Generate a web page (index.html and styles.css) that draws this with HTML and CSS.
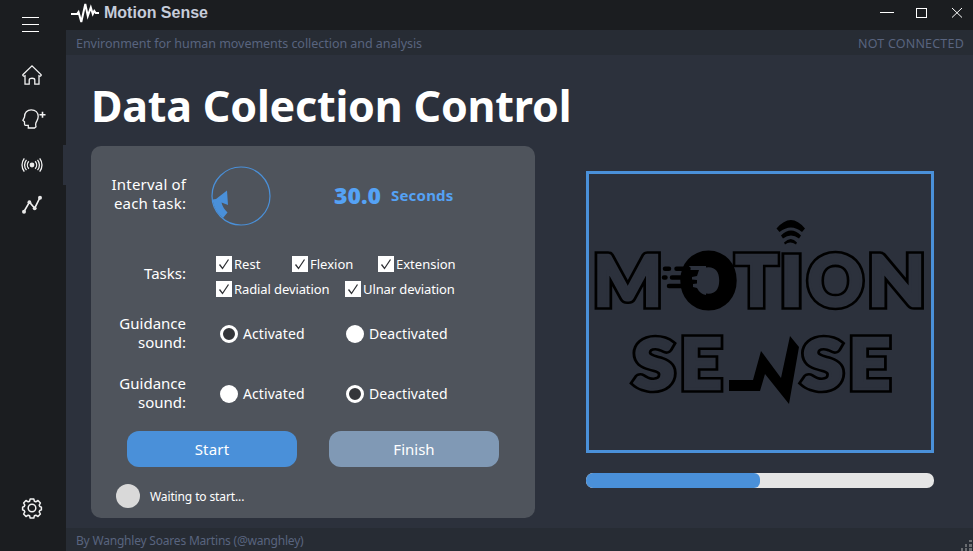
FILE: index.html
```html
<!DOCTYPE html>
<html lang="en">
<head>
<meta charset="utf-8">
<title>Motion Sense</title>
<link rel="stylesheet" href="styles.css">
</head>
<body>
<div class="window">
  <nav class="sidebar">
    <svg class="icon menu" viewBox="0 0 20 20"><path d="M0 3.5h17M0 10.5h17M0 17.5h17" shape-rendering="crispEdges"/></svg>
    <svg class="icon home" viewBox="0 0 20 20"><path d="M.8 9.8 10 .9l9.2 8.9c.2.9-.8 1.6-2.2 1v8.3h-4.2v-4.2c0-2.2-5.6-2.2-5.6 0v4.2H3v-8.3c-1.4.6-2.4-.1-2.2-1z"/></svg>
    <svg class="icon user" viewBox="0 0 24 20"><path d="M6.300 19v-2.700H3.500c-.8 0-1-.4-1-1.3v-2.200L.9 11.400 2.500 8C2.300 3.400 5.400.8 9.200.8c4.400 0 7 3 7 6.800 0 3.200-1.800 4.500-2.400 6.600-.4 1.500-.1 2.500.2 3.600L12.500 19z"/><path class="bold" d="M20.500 2.800v6M17.500 5.800h6"/></svg>
    <svg class="icon signal" viewBox="0 0 20 16"><circle class="dot" cx="10" cy="8" r="2.400"/><path d="M6.800 4.300a5.500 5.500 0 0 0 0 7.400M13.200 4.300a5.500 5.500 0 0 1 0 7.400M4.500 2.800a8 8 0 0 0 0 10.400M15.500 2.800a8 8 0 0 1 0 10.400M2.300 1.300a11 11 0 0 0 0 13.400M17.700 1.300a11 11 0 0 1 0 13.400"/></svg>
    <svg class="icon chart" viewBox="0 0 20 20"><path class="bold" d="m2 16.500 5.500-9.300 5.200 6L18 2.500"/><g class="dot"><circle cx="2" cy="16.700" r="2"/><circle cx="7.400" cy="7.200" r="1.900"/><circle cx="12.700" cy="13.300" r="1.900"/><circle cx="18" cy="2.700" r="2"/></g></svg>
    <svg class="icon gear" viewBox="0 0 20 20"><path class="rim" d="M8.200.9h3.600l.6 2.300 1.400.6 2.200-1.300 2.400 2.500-1.200 2.100.6 1.400 1.600.6v2.800l-1.600.6-.6 1.400 1.200 2.100-2.400 2.500-2.200-1.300-1.400.6-.6 2.300H8.200l-.6-2.300-1.400-.6L4 18.500 1.600 16l1.200-2.100-.6-1.400-1.600-.6V9.100l1.600-.6.6-1.400L1.600 5 4 2.500l2.200 1.300 1.400-.6z"/><circle class="rim" cx="10" cy="10" r="3.800"/></svg>
  </nav>
  <div class="main">
    <header class="titlebar">
      <svg class="pulse" viewBox="0 0 28 22"><path d="M0 12h6l1.500-2L10.300 20 14.300 2l2.500 12 3-8.500 2 6.500 1.500-3 1.500 2H28"/></svg>
      <span class="app-name">Motion Sense</span>
      <svg class="controls" viewBox="0 0 84 12" shape-rendering="crispEdges"><path d="M0 6.500h14M36.500 2.500h10v9h-10z"/><path d="m72 2 10 9.500M82 2 72 11.500" shape-rendering="auto"/></svg>
    </header>
    <div class="infobar"><span class="desc">Environment for human movements collection and analysis</span><span class="conn">NOT CONNECTED</span></div>
    <main class="content">
      <span class="active-tab"></span>
      <h1>Data Colection Control</h1>
      <div class="columns">
        <section class="panel">
          <div class="row interval">
            <div class="label"><span class="wide">Interval of</span><br><span class="wide">each task:</span></div>
            <svg class="dial" viewBox="0 0 60 60"><circle cx="30" cy="30" r="29"/><path d="M1.500 33.500 5 33 16 24.500l1 14.500-6.500-2.500q1 5 6 10L12 52Q3 45 1.500 33.500z"/></svg>
            <div class="value"><b>30.0</b><span>Seconds</span></div>
          </div>
          <div class="row tasks">
            <div class="label">Tasks:</div>
            <div class="checks">
              <div class="check-line">
                <label class="check c1"><svg viewBox="0 0 16 16"><path d="m3.500 8.500 3 4 6-9"/></svg><span>Rest</span></label>
                <label class="check c2"><svg viewBox="0 0 16 16"><path d="m3.500 8.500 3 4 6-9"/></svg><span>Flexion</span></label>
                <label class="check"><svg viewBox="0 0 16 16"><path d="m3.500 8.500 3 4 6-9"/></svg><span>Extension</span></label>
              </div>
              <div class="check-line tight">
                <label class="check c3"><svg viewBox="0 0 16 16"><path d="m3.500 8.500 3 4 6-9"/></svg><span>Radial deviation</span></label>
                <label class="check"><svg viewBox="0 0 16 16"><path d="m3.500 8.500 3 4 6-9"/></svg><span>Ulnar deviation</span></label>
              </div>
            </div>
          </div>
          <div class="row sound">
            <div class="label">Guidance<br>sound:</div>
            <label class="radio"><i class="on"></i><span>Activated</span></label>
            <label class="radio"><i></i><span>Deactivated</span></label>
          </div>
          <div class="row sound second">
            <div class="label">Guidance<br>sound:</div>
            <label class="radio"><i></i><span>Activated</span></label>
            <label class="radio"><i class="on"></i><span>Deactivated</span></label>
          </div>
          <div class="buttons"><button class="start">Start</button><button class="finish">Finish</button></div>
          <div class="status"><i></i><span>Waiting to start...</span></div>
        </section>
        <section class="preview">
          <div class="frame">
            <svg class="logo" viewBox="589 174 342 276">
              <defs>
                <g id="letters">
                  <text transform="translate(627.800 306) scale(1.050 1)">M</text>
                  <text transform="translate(756.500 306)">T</text>
                  <text transform="translate(791.500 306) scale(1.120 1)">I</text>
                  <text transform="translate(835.500 306)">O</text>
                  <text transform="translate(896.500 306) scale(1.080 1)">N</text>
                  <text transform="translate(654 388.500) scale(1.100 1)">S</text>
                  <text transform="translate(701 388.500) scale(1.060 1)">E</text>
                  <text transform="translate(822.500 388.500) scale(1.100 1)">S</text>
                  <text transform="translate(869.500 388.500) scale(1.060 1)">E</text>
                </g>
              </defs>
              <use href="#letters" class="edge"/>
              <use href="#letters" class="face"/>
              <text class="solid" transform="translate(708.500 306) scale(.95 1)">O</text>
              <path class="gap" d="M689 266h17v29q-6-1-9-7l-4-1v-3l4-.5v-3.500l-5-.5v-2.500l5-1 2-6h-9z"/>
              <path class="streaks" d="M665 268.700h4M676.500 268.700h12M664 277.500h1.500M672 277.500h16M669 286h18"/>
              <path d="M729 380h24l8-29 20 27 9-42 9 11-10 57-24-30-5 17h-31z"/>
              <path d="M776.500 228.500q14.500-17 28.500 0l-3 3.500q-11-9-22.500 0zM781 235.500q10-10 20 0l-2 3q-8-6-16 0zM784 242.500q7-7 13 0l-1 2q-6-4-11 0z"/>
            </svg>
          </div>
          <div class="progress"><div class="bar"></div></div>
        </section>
      </div>
    </main>
    <footer class="footer"><span>By Wanghley Soares Martins (@wanghley)</span>
      <svg class="grip" viewBox="0 0 12 12"><path d="M8 0h3v2H8zM4 4h2v3H4zM8 4h3v3H8zM0 8h2v3H0zM4 8h2v3H4zM8 8h3v3H8z"/></svg>
    </footer>
  </div>
</div>
</body>
</html>
```
FILE: styles.css
```css
* { box-sizing: border-box; }
body { margin: 0; font-family: "Noto Sans", "Open Sans", sans-serif; color: #fff; }
.window { display: flex; width: 973px; height: 551px; overflow: hidden; background: #2c313c; }
.sidebar { width: 66px; background: #1b1d20; display: flex; flex-direction: column; align-items: flex-start; padding: 14px 0 0 22px; }
.icon { width: 20px; height: 20px; fill: none; stroke: #f2f2f2; stroke-width: 1.3; flex: none; overflow: visible; }
.icon .bold { stroke-width: 1.6; }
.icon .dot { fill: #e8e8e8; stroke: none; }
.icon .rim { stroke-width: 1.5; stroke-linejoin: round; }
.menu { stroke-width: 1; stroke: #fff; }
.home { margin-top: 31px; }
.user { margin-top: 24px; width: 24px; }
.signal { margin-top: 28px; height: 16px; }
.chart { margin-top: 22px; }
.gear { margin-top: 283px; }
.main { flex: 1; display: flex; flex-direction: column; min-width: 0; }
.titlebar { height: 30px; flex: none; background: #1b1d20; display: flex; align-items: flex-start; padding: 2px 11px 0 5px; }
.pulse { width: 28px; height: 22px; fill: none; stroke: #fff; stroke-width: 2; }
.app-name { font: bold 16px/21px "Liberation Sans", sans-serif; color: #c6ccda; margin-left: 5px; }
.controls { width: 84px; height: 12px; margin: 4px -2px 0 auto; fill: none; stroke: #fff; stroke-width: 1; }
.infobar, .footer { background: #272c34; color: #59647f; display: flex; justify-content: space-between; flex: none; font-size: 12.5px; }
.infobar { height: 25px; line-height: 27px; padding: 0 9px 0 10px; }
.desc { letter-spacing: -.04px; }
.conn { letter-spacing: .2px; }
.footer { height: 23px; line-height: 26px; padding: 0 0 0 10px; font-size: 12px; letter-spacing: -.2px; }
.grip { width: 12px; height: 12px; margin-top: 12px; fill: #696c70; }
.content { flex: 1; position: relative; padding: 30px 39px 0 25px; }
.active-tab { position: absolute; left: -3px; top: 90px; width: 3px; height: 40px; background: #2c313c; }
h1 { margin: 0; height: 61px; font-size: 43px; line-height: 42px; font-weight: 700; letter-spacing: -.2px; white-space: nowrap; }
.columns { display: flex; justify-content: space-between; align-items: flex-start; }
.panel { width: 444px; height: 372px; background: #4f545c; border-radius: 10px; }
.row { display: flex; align-items: center; }
.label { width: 95px; text-align: right; font-size: 15px; line-height: 19px; flex: none; margin-top: -2px; }
.interval { height: 100px; }
.interval .label { margin-top: -4px; }
.wide { letter-spacing: .2px; margin-right: -.2px; }
.dial { width: 60px; height: 60px; margin-left: 25px; fill: none; stroke: #4a90d9; stroke-width: 1.2; }
.dial path { fill: #4a90d9; stroke: none; }
.value { margin-left: 63px; display: flex; align-items: center; color: #55a2f5; font-weight: 700; font-size: 15px; letter-spacing: .2px; margin-top: -2px; }
.value b { font-size: 23px; line-height: 30px; width: 57px; letter-spacing: 0; }
.tasks { height: 61px; }
.tasks .label { margin-top: -6px; }
.checks { margin-left: 30px; }
.check-line { display: flex; height: 25px; align-items: center; }
.tight { letter-spacing: -.1px; }
.check { display: flex; align-items: center; font-size: 13px; white-space: nowrap; }
.check svg { width: 16px; height: 16px; background: #fff; fill: none; stroke: #303236; stroke-width: 1.3; margin-right: 2px; }
.c1 { width: 76px; }
.c2 { width: 86px; }
.c3 { width: 129px; }
.sound { height: 54px; }
.second { height: 66px; }
.radio { display: flex; align-items: center; width: 126px; font-size: 14px; letter-spacing: .08px; }
.radio span { margin-top: -1px; }
.label + .radio { margin-left: 34px; }
.radio i { width: 18px; height: 18px; border-radius: 50%; background: #fff; margin-right: 5px; }
.radio .on { background: #34363a; border: 3px solid #fff; }
.buttons { display: flex; gap: 32px; padding: 4px 0 0 36px; }
button { width: 170px; height: 36px; border: 0; border-radius: 12px; color: #fff; font: 15px "Noto Sans", sans-serif; }
.start { background: #4a90d9; letter-spacing: .2px; }
.finish { background: #8099b5; }
.status { display: flex; align-items: center; height: 24px; margin: 17px 0 0 25px; font-size: 12px; letter-spacing: -.12px; }
.status i { width: 24px; height: 24px; border-radius: 50%; background: #d9d9d9; margin-right: 10px; }
.preview { width: 348px; padding-top: 25px; }
.frame { height: 282px; border: 3px solid #4a90d9; }
.logo { display: block; width: 342px; height: 276px; }
.logo text { font: 900 69.5px Lato, sans-serif; text-anchor: middle; }
/* Outlined lettering: a wide dark edge with a background-coloured face over it */
.edge { fill: #000; stroke: #000; stroke-width: 7.6; }
.face { fill: #2c313c; stroke: #2c313c; stroke-width: 2.400; }
.solid { stroke: #000; stroke-width: 7.8; }
.streaks { stroke: #000; stroke-width: 4.500; stroke-linecap: round; }
.gap { fill: #2c313c; }
.progress { height: 15px; margin-top: 20px; border-radius: 7px; background: #e5e5e5; overflow: hidden; }
.bar { width: 50%; height: 100%; border-radius: 6px; background: #4a90d9; }
```
